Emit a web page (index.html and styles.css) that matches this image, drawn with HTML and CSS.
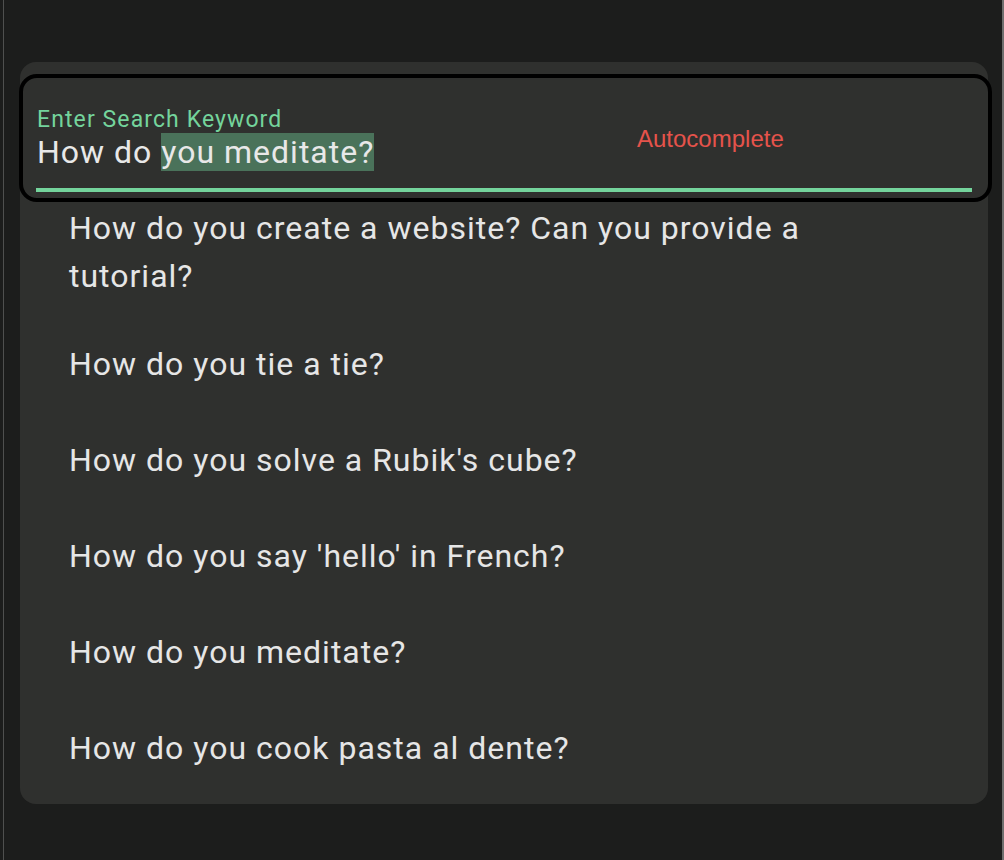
FILE: index.html
```html
<!DOCTYPE html>
<html lang="en">
<head>
<meta charset="utf-8">
<title>Autocomplete</title>
<link rel="stylesheet" href="styles.css">
</head>
<body>
<div class="frame">
  <div class="card">
    <div class="search">
      <div class="search-label">Enter Search Keyword</div>
      <div class="search-input">How do <mark class="sel">you meditate?</mark></div>
      <div class="search-underline"></div>
      <span class="helper">Autocomplete</span>
    </div>
    <ul class="options">
      <li class="option">How do you create a website? Can you provide a tutorial?</li>
      <li class="option">How do you tie a tie?</li>
      <li class="option">How do you solve a Rubik's cube?</li>
      <li class="option">How do you say 'hello' in French?</li>
      <li class="option">How do you meditate?</li>
      <li class="option">How do you cook pasta al dente?</li>
    </ul>
  </div>
</div>
</body>
</html>
```
FILE: styles.css
```css
html, body {
  margin: 0;
  padding: 0;
  background: #1c1d1c;
}

body {
  width: 1004px;
  height: 860px;
  overflow: hidden;
  font-family: Roboto, "Liberation Sans", sans-serif;
}

.frame {
  box-sizing: border-box;
  height: 860px;
  margin-left: 3px;
  border-left: 1px solid #4f504f;
  border-right: 2px solid #6e6f6e;
  padding: 62px 0 0 16px;
}

.card {
  width: 968px;
  height: 742px;
  box-sizing: border-box;
  background: #2f302e;
  border-radius: 16px;
  padding-top: 16px;
}

.search {
  position: relative;
  box-sizing: border-box;
  margin-left: 3px;
  width: 965px;
  height: 120px;
  outline: 4px solid #000;
  border-radius: 14px;
  padding: 30px 0 0 14px;
  display: flex;
  flex-direction: column;
}

.search-label {
  font-size: 23px;
  line-height: 24px;
  letter-spacing: 1.1px;
  color: #74d49c;
}

.search-input {
  margin-top: 1px;
  font-size: 32px;
  line-height: 38px;
  letter-spacing: 1px;
  color: #e8e8e8;
}

.sel {
  background: #4a725a;
  color: #e8e8e8;
}

.search-underline {
  margin-top: 17px;
  margin-left: -1px;
  width: 936px;
  height: 4px;
  background: #74d49c;
}

.helper {
  position: absolute;
  left: 614px;
  top: 47px;
  font-family: "Liberation Sans", Arial, sans-serif;
  font-size: 24px;
  line-height: 28px;
  color: #e5534b;
}

.options {
  list-style: none;
  margin: 0;
  padding: 0;
  height: 606px;
  overflow: hidden;
}

.option {
  box-sizing: border-box;
  min-height: 96px;
  padding: 6px 100px 34px 49px;
  font-size: 32px;
  line-height: 48px;
  letter-spacing: 1px;
  color: #e6e6e6;
}
```
